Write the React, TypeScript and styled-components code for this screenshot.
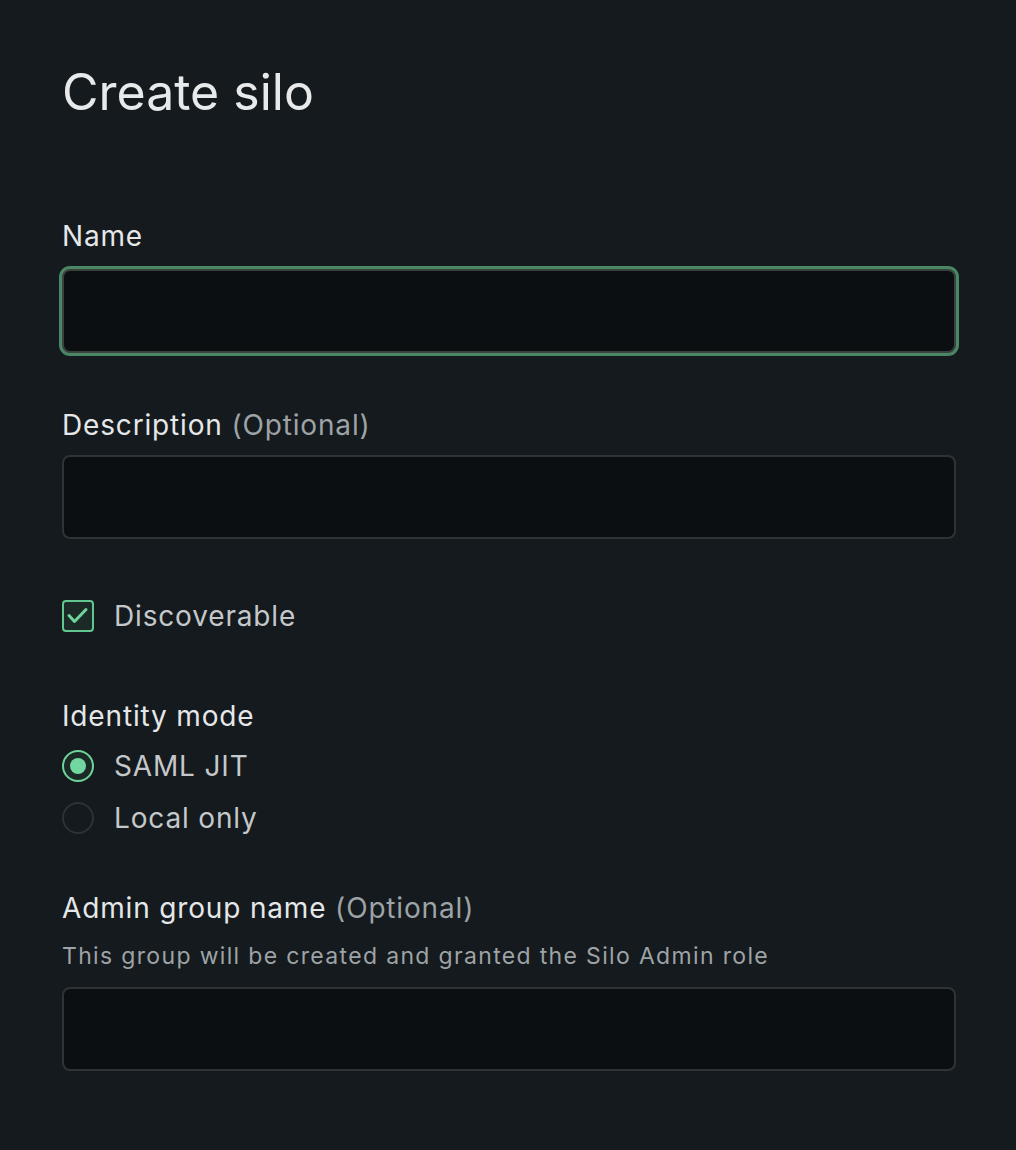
import { createGlobalStyle } from "styled-components";
import styled from "styled-components";

const GlobalStyle = createGlobalStyle`
  html, body {
    margin: 0;
    padding: 0;
    background: #141a1d;
  }
  body {
    font-family: Inter, "Noto Sans", sans-serif;
    color: #e7e7e8;
  }
`;

const Page = styled.div`
  min-height: 1150px;
  padding: 62px 60px 0 62px;
  box-sizing: border-box;
`;

const Title = styled.h1`
  margin: 0 0 98px;
  font-size: 50px;
  font-weight: 400;
  line-height: 60px;
  color: #e8e9ea;
`;

const Form = styled.form`
  display: flex;
  flex-direction: column;
  width: 894px;
`;

const Field = styled.div<{ $gap?: number }>`
  display: flex;
  flex-direction: column;
  margin-bottom: ${(p) => p.$gap ?? 58}px;
`;

const Label = styled.label`
  font-size: 28px;
  line-height: 32px;
  font-weight: 400;
  letter-spacing: 0.03em;
  color: #e6e7e8;
  margin-bottom: 14px;
`;

const Optional = styled.span`
  color: #9ea3a6;
`;

const Help = styled.div`
  font-size: 23px;
  line-height: 28px;
  letter-spacing: 0.058em;
  color: #9ea3a6;
  margin: 4px 0 17px;
`;

const Input = styled.input<{ $focused?: boolean }>`
  box-sizing: border-box;
  width: 100%;
  height: 84px;
  background: #0b0f12;
  border: 2px solid ${(p) => (p.$focused ? "#3a423e" : "#2e3336")};
  border-radius: 8px;
  outline: none;
  color: #e7e7e8;
  font: inherit;
  font-size: 28px;
  padding: 0 20px;
  margin: ${(p) => (p.$focused ? "3px 0" : "0")};
  box-shadow: ${(p) => (p.$focused ? "0 0 0 3px #4a8865" : "none")};
`;

const OptionRow = styled.label`
  display: flex;
  align-items: center;
  gap: 20px;
  font-size: 28px;
  letter-spacing: 0.03em;
  color: #c5c8ca;
  height: 32px;
`;

const Box = styled.span`
  box-sizing: border-box;
  width: 32px;
  height: 32px;
  border: 2px solid #62c68f;
  border-radius: 4px;
  background: #1b2a26;
  display: flex;
  align-items: center;
  justify-content: center;
`;

const RadioGroup = styled.div`
  display: flex;
  flex-direction: column;
  gap: 20px;
  margin-top: 4px;
`;

const Circle = styled.span<{ $checked?: boolean }>`
  box-sizing: border-box;
  width: 32px;
  height: 32px;
  border-radius: 50%;
  border: 2px solid ${(p) => (p.$checked ? "#6fd39c" : "#2c3235")};
  background: ${(p) => (p.$checked ? "#1b2a26" : "transparent")};
  display: flex;
  align-items: center;
  justify-content: center;
  &::after {
    content: "";
    width: 16px;
    height: 16px;
    border-radius: 50%;
    background: #72d6a0;
    display: ${(p) => (p.$checked ? "block" : "none")};
  }
`;

export default function App() {
  return (
    <>
      <GlobalStyle />
      <Page>
        <Title>Create silo</Title>
        <Form>
          <Field $gap={53}>
            <Label>Name</Label>
            <Input $focused />
          </Field>
          <Field $gap={61}>
            <Label>
              Description <Optional>(Optional)</Optional>
            </Label>
            <Input />
          </Field>
          <Field $gap={68}>
            <OptionRow>
              <Box>
                <svg width="28" height="28" viewBox="0 0 28 28" fill="none">
                  <path
                    d="M5 13.5l5.5 6 11.5-12"
                    stroke="#6fd39c"
                    strokeWidth="3"
                    strokeLinecap="round"
                    strokeLinejoin="round"
                  />
                </svg>
              </Box>
              Discoverable
            </OptionRow>
          </Field>
          <Field $gap={58}>
            <Label>Identity mode</Label>
            <RadioGroup>
              <OptionRow>
                <Circle $checked />
                SAML JIT
              </OptionRow>
              <OptionRow>
                <Circle />
                Local only
              </OptionRow>
            </RadioGroup>
          </Field>
          <Field>
            <Label>
              Admin group name <Optional>(Optional)</Optional>
            </Label>
            <Help>This group will be created and granted the Silo Admin role</Help>
            <Input />
          </Field>
        </Form>
      </Page>
    </>
  );
}
